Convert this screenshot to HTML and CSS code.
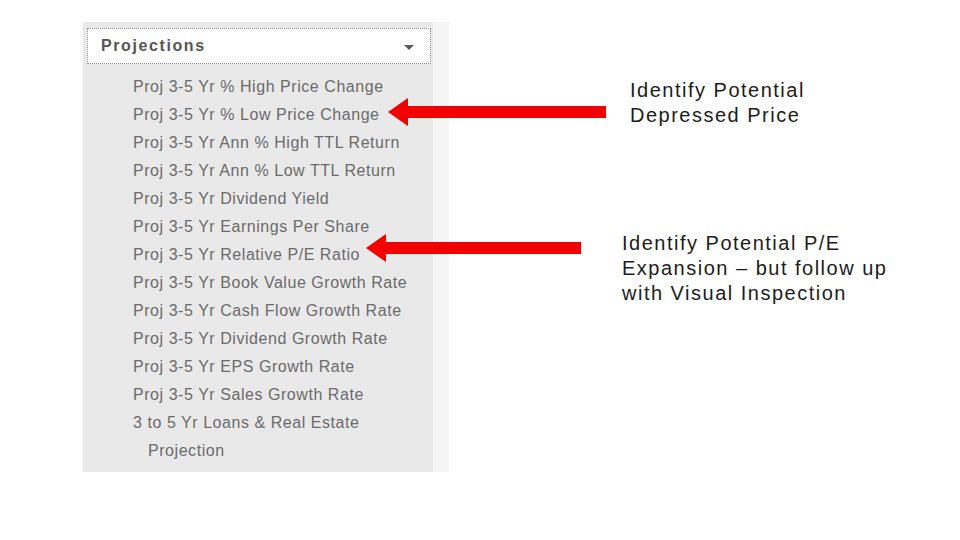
FILE: index.html
```html
<!DOCTYPE html>
<html>
<head>
<meta charset="utf-8">
<link rel="stylesheet" href="styles.css">
</head>
<body>
<div class="stage">
  <div class="panel">
    <div class="menu">
      <div class="dropdown">
        <span class="dropdown-title">Projections</span>
        <span class="caret"></span>
      </div>
      <ul class="options">
        <li>Proj 3-5 Yr % High Price Change</li>
        <li>Proj 3-5 Yr % Low Price Change</li>
        <li>Proj 3-5 Yr Ann % High TTL Return</li>
        <li>Proj 3-5 Yr Ann % Low TTL Return</li>
        <li>Proj 3-5 Yr Dividend Yield</li>
        <li>Proj 3-5 Yr Earnings Per Share</li>
        <li>Proj 3-5 Yr Relative P/E Ratio</li>
        <li>Proj 3-5 Yr Book Value Growth Rate</li>
        <li>Proj 3-5 Yr Cash Flow Growth Rate</li>
        <li>Proj 3-5 Yr Dividend Growth Rate</li>
        <li>Proj 3-5 Yr EPS Growth Rate</li>
        <li>Proj 3-5 Yr Sales Growth Rate</li>
        <li class="wrap">3 to 5 Yr Loans &amp; Real Estate Projection</li>
      </ul>
    </div>
    <div class="edge"></div>
  </div>

  <svg class="arrow arrow-1" width="218" height="32" viewBox="0 0 218 32">
    <polygon points="0,16 20,2 20,10 218,10 218,22 20,22 20,30" fill="#f20000"/>
  </svg>
  <svg class="arrow arrow-2" width="215" height="32" viewBox="0 0 215 32">
    <polygon points="0,16 20,2 20,10 215,10 215,22 20,22 20,30" fill="#f20000"/>
  </svg>

  <div class="note note-1">Identify Potential<br>Depressed Price</div>
  <div class="note note-2">Identify Potential P/E<br>Expansion – but follow up<br>with Visual Inspection</div>
</div>
</body>
</html>
```

FILE: styles.css
```css
html, body {
  margin: 0;
  padding: 0;
  background: #ffffff;
}

.stage {
  position: relative;
  width: 960px;
  height: 540px;
  overflow: hidden;
  font-family: "Liberation Sans", Arial, sans-serif;
}

.panel {
  display: flex;
  margin-left: 83px;
  padding-top: 22px;
  width: 366px;
}

.menu {
  width: 350px;
  background: #e9e9e9;
  padding: 6px 2px 7px 4px;
  box-sizing: border-box;
}

.edge {
  width: 16px;
  background: #f5f5f5;
}

.dropdown {
  height: 36px;
  box-sizing: border-box;
  background: #ffffff;
  border: 1px dotted #8c8c8c;
  display: flex;
  align-items: center;
  justify-content: space-between;
  padding: 0 16px 0 13px;
}

.dropdown-title {
  font-size: 16px;
  font-weight: bold;
  letter-spacing: 1.6px;
  color: #555555;
}

.caret {
  width: 0;
  height: 0;
  border-left: 5px solid transparent;
  border-right: 5px solid transparent;
  border-top: 5px solid #5a5a5a;
  margin-top: 2px;
}

.options {
  list-style: none;
  margin: 9px 0 0 0;
  padding: 0 20px 0 46px;
}

.options li {
  height: 28px;
  line-height: 28px;
  font-size: 16px;
  letter-spacing: 0.55px;
  color: #6b6b6b;
  white-space: nowrap;
}

.options li.wrap {
  height: auto;
  white-space: normal;
  padding-left: 15px;
  text-indent: -15px;
}

.arrow {
  position: absolute;
}

.arrow-1 {
  left: 388px;
  top: 96px;
}

.arrow-2 {
  left: 366px;
  top: 232px;
}

.note {
  position: absolute;
  font-size: 20px;
  line-height: 25px;
  letter-spacing: 1.5px;
  color: #1c1c1c;
  white-space: nowrap;
}

.note-1 {
  left: 630px;
  top: 78px;
}

.note-2 {
  left: 622px;
  top: 231px;
}
```
